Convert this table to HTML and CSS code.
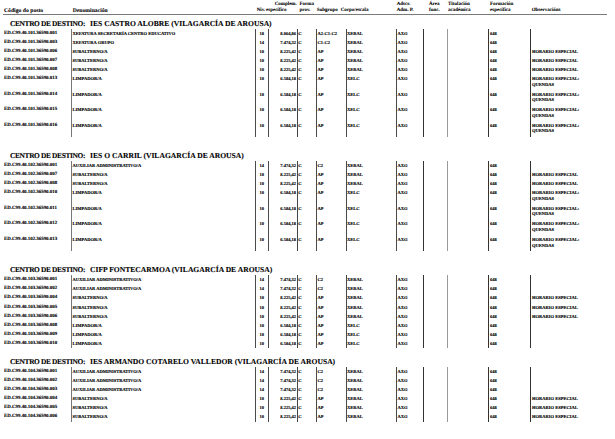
FILE: index.html
```html
<!DOCTYPE html>
<html lang="gl">
<head>
<meta charset="utf-8">
<title>RPT</title>
<link rel="stylesheet" href="styles.css">
</head>
<body>
<div class="page">
  <div class="head">
    <div class="h hc1 big"><span>Código do posto</span></div>
    <div class="h hc2 big"><span>Denominación</span></div>
    <div class="h hc3"><span>Niv.</span></div>
    <div class="h hc4"><span class="l1">Complem.</span><span>específico</span></div>
    <div class="h hc5"><span>Forma</span><span>prov.</span></div>
    <div class="h hc6"><span>Subgrupo</span></div>
    <div class="h hc7"><span>Corpo/escala</span></div>
    <div class="h hc8"><span>Adscr.</span><span>Adm. P.</span></div>
    <div class="h hc9"><span>Área</span><span>func.</span></div>
    <div class="h hc10"><span>Titulación</span><span>académica</span></div>
    <div class="h hc11"><span>Formación</span><span>específica</span></div>
    <div class="h hc12"><span>Observacións</span></div>
  </div>

  <section class="sec first">
    <div class="title"><span class="tl">CENTRO DE DESTINO:</span>IES CASTRO ALOBRE (VILAGARCÍA DE AROUSA)</div>
    <div class="rows">
      <div class="row"><div class="c1">ED.C99.40.101.36590.001</div><div class="c2">XEFATURA SECRETARÍA CENTRO EDUCATIVO</div><div class="c3">18</div><div class="c4">8.064,86</div><div class="c5">C</div><div class="c6">A2-C1-C2</div><div class="c7">XERAL</div><div class="c8">AXG</div><div class="c9"></div><div class="c10"></div><div class="c11">648</div><div class="c12"></div></div>
      <div class="row"><div class="c1">ED.C99.40.101.36590.003</div><div class="c2">XEFATURA GRUPO</div><div class="c3">14</div><div class="c4">7.474,32</div><div class="c5">C</div><div class="c6">C1-C2</div><div class="c7">XERAL</div><div class="c8">AXG</div><div class="c9"></div><div class="c10"></div><div class="c11">648</div><div class="c12"></div></div>
      <div class="row"><div class="c1">ED.C99.40.101.36590.006</div><div class="c2">SUBALTERNO/A</div><div class="c3">10</div><div class="c4">8.225,42</div><div class="c5">C</div><div class="c6">AP</div><div class="c7">XERAL</div><div class="c8">AXG</div><div class="c9"></div><div class="c10"></div><div class="c11">648</div><div class="c12">HORARIO ESPECIAL</div></div>
      <div class="row"><div class="c1">ED.C99.40.101.36590.007</div><div class="c2">SUBALTERNO/A</div><div class="c3">10</div><div class="c4">8.225,42</div><div class="c5">C</div><div class="c6">AP</div><div class="c7">XERAL</div><div class="c8">AXG</div><div class="c9"></div><div class="c10"></div><div class="c11">648</div><div class="c12">HORARIO ESPECIAL</div></div>
      <div class="row"><div class="c1">ED.C99.40.101.36590.008</div><div class="c2">SUBALTERNO/A</div><div class="c3">10</div><div class="c4">8.225,42</div><div class="c5">C</div><div class="c6">AP</div><div class="c7">XERAL</div><div class="c8">AXG</div><div class="c9"></div><div class="c10"></div><div class="c11">648</div><div class="c12">HORARIO ESPECIAL</div></div>
      <div class="row two"><div class="c1">ED.C99.40.101.36590.013</div><div class="c2">LIMPADOR/A</div><div class="c3">10</div><div class="c4">6.584,18</div><div class="c5">C</div><div class="c6">AP</div><div class="c7">XELC</div><div class="c8">AXG</div><div class="c9"></div><div class="c10"></div><div class="c11">648</div><div class="c12">HORARIO ESPECIAL:<br>QUENDAS</div></div>
      <div class="row two"><div class="c1">ED.C99.40.101.36590.014</div><div class="c2">LIMPADOR/A</div><div class="c3">10</div><div class="c4">6.584,18</div><div class="c5">C</div><div class="c6">AP</div><div class="c7">XELC</div><div class="c8">AXG</div><div class="c9"></div><div class="c10"></div><div class="c11">648</div><div class="c12">HORARIO ESPECIAL:<br>QUENDAS</div></div>
      <div class="row two"><div class="c1">ED.C99.40.101.36590.015</div><div class="c2">LIMPADOR/A</div><div class="c3">10</div><div class="c4">6.584,18</div><div class="c5">C</div><div class="c6">AP</div><div class="c7">XELC</div><div class="c8">AXG</div><div class="c9"></div><div class="c10"></div><div class="c11">648</div><div class="c12">HORARIO ESPECIAL:<br>QUENDAS</div></div>
      <div class="row two"><div class="c1">ED.C99.40.101.36590.016</div><div class="c2">LIMPADOR/A</div><div class="c3">10</div><div class="c4">6.584,18</div><div class="c5">C</div><div class="c6">AP</div><div class="c7">XELC</div><div class="c8">AXG</div><div class="c9"></div><div class="c10"></div><div class="c11">648</div><div class="c12">HORARIO ESPECIAL:<br>QUENDAS</div></div>
    </div>
  </section>

  <section class="sec wide">
    <div class="title"><span class="tl">CENTRO DE DESTINO:</span>IES O CARRIL (VILAGARCÍA DE AROUSA)</div>
    <div class="rows">
      <div class="row"><div class="c1">ED.C99.40.102.36590.001</div><div class="c2">AUXILIAR ADMINISTRATIVO/A</div><div class="c3">14</div><div class="c4">7.474,32</div><div class="c5">C</div><div class="c6">C2</div><div class="c7">XERAL</div><div class="c8">AXG</div><div class="c9"></div><div class="c10"></div><div class="c11">648</div><div class="c12"></div></div>
      <div class="row"><div class="c1">ED.C99.40.102.36590.007</div><div class="c2">SUBALTERNO/A</div><div class="c3">10</div><div class="c4">8.225,42</div><div class="c5">C</div><div class="c6">AP</div><div class="c7">XERAL</div><div class="c8">AXG</div><div class="c9"></div><div class="c10"></div><div class="c11">648</div><div class="c12">HORARIO ESPECIAL</div></div>
      <div class="row"><div class="c1">ED.C99.40.102.36590.008</div><div class="c2">SUBALTERNO/A</div><div class="c3">10</div><div class="c4">8.225,42</div><div class="c5">C</div><div class="c6">AP</div><div class="c7">XERAL</div><div class="c8">AXG</div><div class="c9"></div><div class="c10"></div><div class="c11">648</div><div class="c12">HORARIO ESPECIAL</div></div>
      <div class="row two"><div class="c1">ED.C99.40.102.36590.010</div><div class="c2">LIMPADOR/A</div><div class="c3">10</div><div class="c4">6.584,18</div><div class="c5">C</div><div class="c6">AP</div><div class="c7">XELC</div><div class="c8">AXG</div><div class="c9"></div><div class="c10"></div><div class="c11">648</div><div class="c12">HORARIO ESPECIAL:<br>QUENDAS</div></div>
      <div class="row two"><div class="c1">ED.C99.40.102.36590.011</div><div class="c2">LIMPADOR/A</div><div class="c3">10</div><div class="c4">6.584,18</div><div class="c5">C</div><div class="c6">AP</div><div class="c7">XELC</div><div class="c8">AXG</div><div class="c9"></div><div class="c10"></div><div class="c11">648</div><div class="c12">HORARIO ESPECIAL:<br>QUENDAS</div></div>
      <div class="row two"><div class="c1">ED.C99.40.102.36590.012</div><div class="c2">LIMPADOR/A</div><div class="c3">10</div><div class="c4">6.584,18</div><div class="c5">C</div><div class="c6">AP</div><div class="c7">XELC</div><div class="c8">AXG</div><div class="c9"></div><div class="c10"></div><div class="c11">648</div><div class="c12">HORARIO ESPECIAL:<br>QUENDAS</div></div>
      <div class="row two"><div class="c1">ED.C99.40.102.36590.013</div><div class="c2">LIMPADOR/A</div><div class="c3">10</div><div class="c4">6.584,18</div><div class="c5">C</div><div class="c6">AP</div><div class="c7">XELC</div><div class="c8">AXG</div><div class="c9"></div><div class="c10"></div><div class="c11">648</div><div class="c12">HORARIO ESPECIAL:<br>QUENDAS</div></div>
    </div>
  </section>

  <section class="sec wide">
    <div class="title"><span class="tl">CENTRO DE DESTINO:</span>CIFP FONTECARMOA (VILAGARCÍA DE AROUSA)</div>
    <div class="rows">
      <div class="row"><div class="c1">ED.C99.40.103.36590.001</div><div class="c2">AUXILIAR ADMINISTRATIVO/A</div><div class="c3">14</div><div class="c4">7.474,32</div><div class="c5">C</div><div class="c6">C2</div><div class="c7">XERAL</div><div class="c8">AXG</div><div class="c9"></div><div class="c10"></div><div class="c11">648</div><div class="c12"></div></div>
      <div class="row"><div class="c1">ED.C99.40.103.36590.002</div><div class="c2">AUXILIAR ADMINISTRATIVO/A</div><div class="c3">14</div><div class="c4">7.474,32</div><div class="c5">C</div><div class="c6">C2</div><div class="c7">XERAL</div><div class="c8">AXG</div><div class="c9"></div><div class="c10"></div><div class="c11">648</div><div class="c12"></div></div>
      <div class="row"><div class="c1">ED.C99.40.103.36590.004</div><div class="c2">SUBALTERNO/A</div><div class="c3">10</div><div class="c4">8.225,42</div><div class="c5">C</div><div class="c6">AP</div><div class="c7">XERAL</div><div class="c8">AXG</div><div class="c9"></div><div class="c10"></div><div class="c11">648</div><div class="c12">HORARIO ESPECIAL</div></div>
      <div class="row"><div class="c1">ED.C99.40.103.36590.005</div><div class="c2">SUBALTERNO/A</div><div class="c3">10</div><div class="c4">8.225,42</div><div class="c5">C</div><div class="c6">AP</div><div class="c7">XERAL</div><div class="c8">AXG</div><div class="c9"></div><div class="c10"></div><div class="c11">648</div><div class="c12">HORARIO ESPECIAL</div></div>
      <div class="row"><div class="c1">ED.C99.40.103.36590.006</div><div class="c2">SUBALTERNO/A</div><div class="c3">10</div><div class="c4">8.225,42</div><div class="c5">C</div><div class="c6">AP</div><div class="c7">XERAL</div><div class="c8">AXG</div><div class="c9"></div><div class="c10"></div><div class="c11">648</div><div class="c12">HORARIO ESPECIAL</div></div>
      <div class="row"><div class="c1">ED.C99.40.103.36590.008</div><div class="c2">LIMPADOR/A</div><div class="c3">10</div><div class="c4">6.584,18</div><div class="c5">C</div><div class="c6">AP</div><div class="c7">XELC</div><div class="c8">AXG</div><div class="c9"></div><div class="c10"></div><div class="c11">648</div><div class="c12"></div></div>
      <div class="row"><div class="c1">ED.C99.40.103.36590.009</div><div class="c2">LIMPADOR/A</div><div class="c3">10</div><div class="c4">6.584,18</div><div class="c5">C</div><div class="c6">AP</div><div class="c7">XELC</div><div class="c8">AXG</div><div class="c9"></div><div class="c10"></div><div class="c11">648</div><div class="c12"></div></div>
      <div class="row"><div class="c1">ED.C99.40.103.36590.010</div><div class="c2">LIMPADOR/A</div><div class="c3">10</div><div class="c4">6.584,18</div><div class="c5">C</div><div class="c6">AP</div><div class="c7">XELC</div><div class="c8">AXG</div><div class="c9"></div><div class="c10"></div><div class="c11">648</div><div class="c12"></div></div>
    </div>
  </section>

  <section class="sec">
    <div class="title"><span class="tl">CENTRO DE DESTINO:</span>IES ARMANDO COTARELO VALLEDOR (VILAGARCÍA DE AROUSA)</div>
    <div class="rows">
      <div class="row"><div class="c1">ED.C99.40.104.36590.001</div><div class="c2">AUXILIAR ADMINISTRATIVO/A</div><div class="c3">14</div><div class="c4">7.474,32</div><div class="c5">C</div><div class="c6">C2</div><div class="c7">XERAL</div><div class="c8">AXG</div><div class="c9"></div><div class="c10"></div><div class="c11">648</div><div class="c12"></div></div>
      <div class="row"><div class="c1">ED.C99.40.104.36590.002</div><div class="c2">AUXILIAR ADMINISTRATIVO/A</div><div class="c3">14</div><div class="c4">7.474,32</div><div class="c5">C</div><div class="c6">C2</div><div class="c7">XERAL</div><div class="c8">AXG</div><div class="c9"></div><div class="c10"></div><div class="c11">648</div><div class="c12"></div></div>
      <div class="row"><div class="c1">ED.C99.40.104.36590.003</div><div class="c2">AUXILIAR ADMINISTRATIVO/A</div><div class="c3">14</div><div class="c4">7.474,32</div><div class="c5">C</div><div class="c6">C2</div><div class="c7">XERAL</div><div class="c8">AXG</div><div class="c9"></div><div class="c10"></div><div class="c11">648</div><div class="c12"></div></div>
      <div class="row"><div class="c1">ED.C99.40.104.36590.004</div><div class="c2">SUBALTERNO/A</div><div class="c3">10</div><div class="c4">8.225,42</div><div class="c5">C</div><div class="c6">AP</div><div class="c7">XERAL</div><div class="c8">AXG</div><div class="c9"></div><div class="c10"></div><div class="c11">648</div><div class="c12">HORARIO ESPECIAL</div></div>
      <div class="row"><div class="c1">ED.C99.40.104.36590.005</div><div class="c2">SUBALTERNO/A</div><div class="c3">10</div><div class="c4">8.225,42</div><div class="c5">C</div><div class="c6">AP</div><div class="c7">XERAL</div><div class="c8">AXG</div><div class="c9"></div><div class="c10"></div><div class="c11">648</div><div class="c12">HORARIO ESPECIAL</div></div>
      <div class="row"><div class="c1">ED.C99.40.104.36590.006</div><div class="c2">SUBALTERNO/A</div><div class="c3">10</div><div class="c4">8.225,42</div><div class="c5">C</div><div class="c6">AP</div><div class="c7">XERAL</div><div class="c8">AXG</div><div class="c9"></div><div class="c10"></div><div class="c11">648</div><div class="c12">HORARIO ESPECIAL</div></div>
    </div>
  </section>
</div>
</body>
</html>
```

FILE: styles.css
```css
* { box-sizing: border-box; }
html, body { margin: 0; padding: 0; background: #fff; }
body {
  font-family: "Liberation Serif", "Times New Roman", serif;
  color: #000;
  width: 615px;
  height: 439px;
  overflow: hidden;
  text-rendering: geometricPrecision;
}
.page { padding: 0 3px 0 4px; }

/* header: its own column grid, as in the source document */
.head {
  display: grid;
  grid-template-columns: 68.7px 184px 9.3px 33.5px 17.2px 24px 56px 32.3px 19px 42px 41.7px 75.3px;
  height: 14.7px;
  width: 604px;
  margin-left: -1px;
  padding-left: 1px;
  border-bottom: 1.3px solid #7a7a7a;
  font-weight: bold;
  font-size: 5px;
  line-height: 6px;
  -webkit-text-stroke: 0.08px #000;
}
.head .h {
  display: flex;
  flex-direction: column;
  justify-content: flex-end;
  white-space: nowrap;
}
.head .big { font-size: 5.7px; }
.head .hc4 .l1 { align-self: flex-end; padding-right: 2.7px; }

.row {
  display: grid;
  grid-template-columns: 67px 183.5px 13.5px 29px 19px 29.5px 50.5px 27px 23.5px 41.5px 42px 82px;
  height: 9.15px;
  font-weight: bold;
  font-size: 4.5px;
  line-height: 5.5px;
  -webkit-text-stroke: 0.12px #000;
}
.row.two { height: 15.56px; }

.sec { margin-top: 8.4px; }
.sec.wide { margin-top: 14.5px; }
.sec.first { margin-top: 4px; }
.title {
  height: 10px;
  line-height: 10px;
  font-size: 7.6px;
  font-weight: bold;
  padding-left: 6px;
  white-space: nowrap;
  -webkit-text-stroke: 0.1px #000;
}
.tl {
  display: inline-block;
  width: 80px;
  font-size: 7.4px;
  letter-spacing: -0.35px;
}

.row > div { padding-top: 1.9px; white-space: nowrap; overflow: hidden; }
.row > div + div { border-left: 1px solid #4a4a4a; }
.row .c1 { font-size: 4.9px; }
.row .c2 { padding-left: 0.5px; border-left-color: #777; }
.row .c3 { text-align: center; }
.row .c4 { text-align: right; padding-right: 1px; }
.row .c5 { padding-left: 0.3px; border-left-color: #444; }
.row .c6 { padding-left: 0.5px; }
.row .c7 { padding-left: 0.5px; }
.row .c8 { padding-left: 0.5px; }
.row .c9 { border-left-color: #333; }
.row .c10 { border-left-color: #999; }
.row .c11 { padding-left: 1px; border-left-color: #333; }
.row .c12 { padding-left: 1px; border-left-color: #333; white-space: normal; }
```
